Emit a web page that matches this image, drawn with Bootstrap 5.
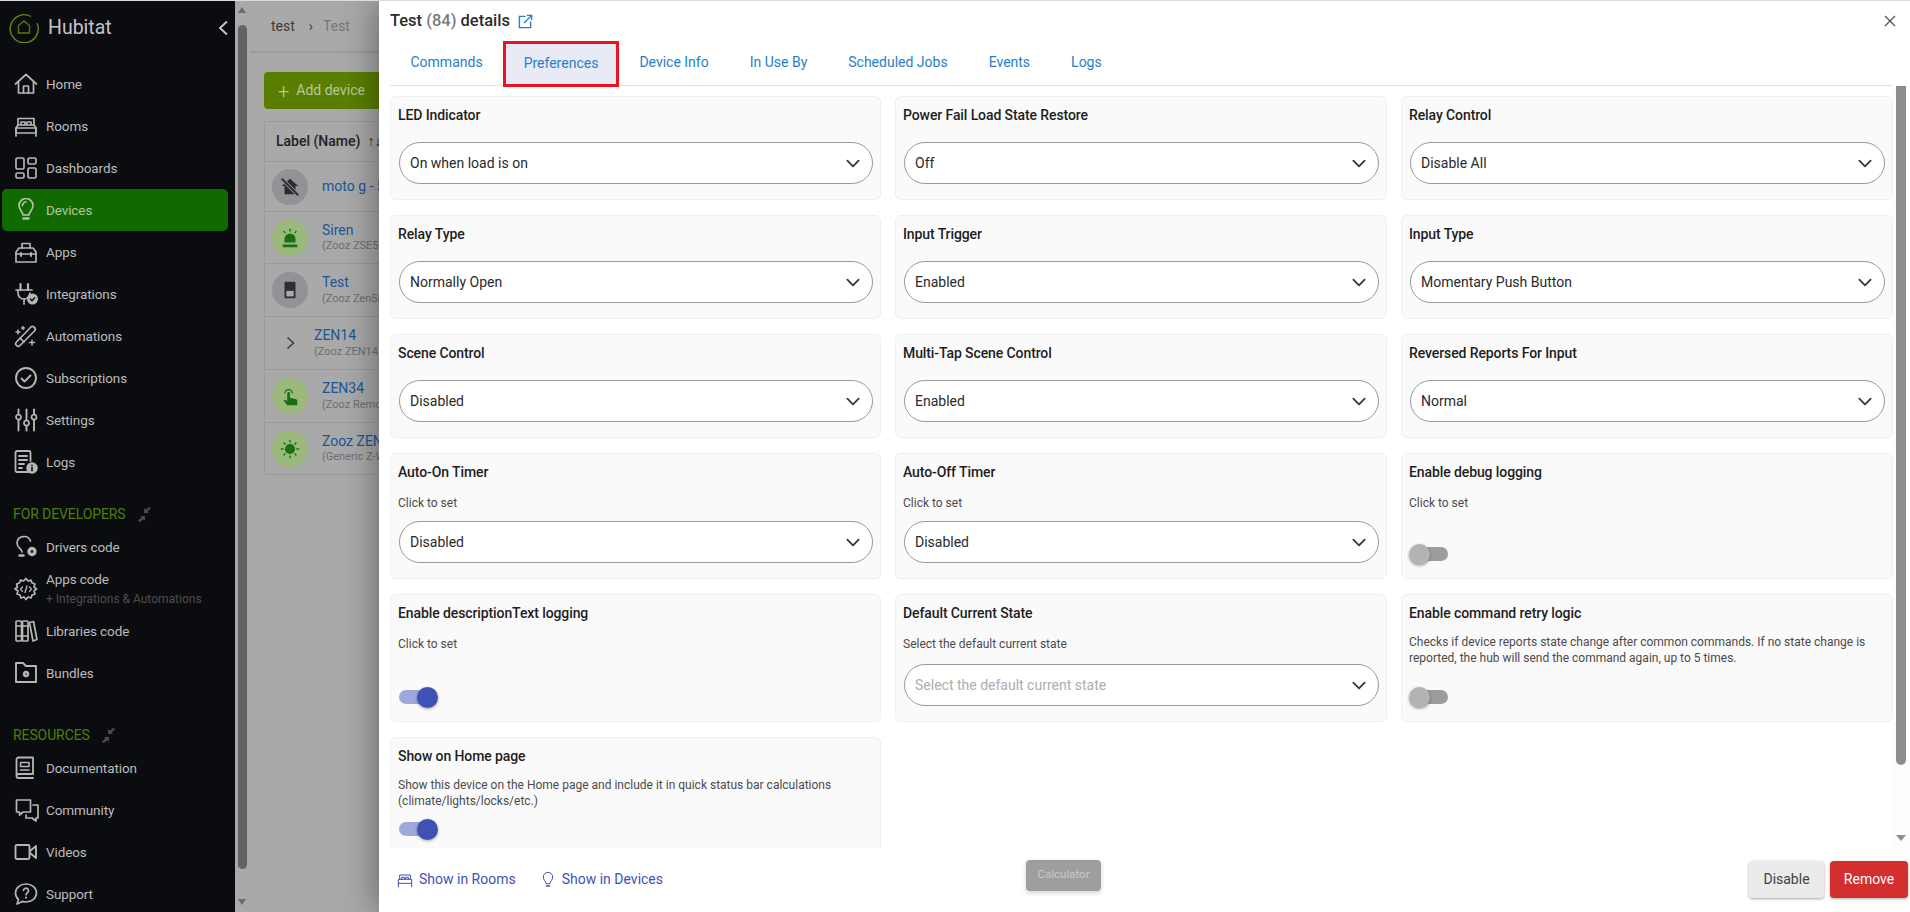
<!DOCTYPE html>
<html lang="en">
<head>
  <meta charset="UTF-8" />
  <title>Test (84) details | Hubitat</title>
  <link href="https://cdn.jsdelivr.net/npm/bootstrap@5.3.0/dist/css/bootstrap.min.css" rel="stylesheet">
  <style>
    html, body { height: 100%; overflow: hidden; }
    body { font-family: Roboto, "Liberation Sans", sans-serif; font-size: 14px; background: #a9a9a9; }
    .shell { height: 912px; border-top: 1px solid #dcdcdc; overflow: hidden; }

    /* sidebar */
    .side { width: 235px; flex: none; background: #0b0c10; color: #bcbcbc; }
    .brand { height: 62px; padding: 0 6px 8px 9px; }
    .brand-name { font-size: 19.5px; margin-left: 9px; color: #c4c4c4; }
    .side-item { height: 42px; margin: 0 7px 0 2px; padding-left: 12px; border-radius: 5px; color: #bcbcbc; text-decoration: none; letter-spacing: -.1px; line-height: 1.25; font-size: 13.5px; }
    .side-item svg { width: 24px; height: 24px; flex: none; margin-right: 8px; fill: none; stroke: #b6b6b6; stroke-width: 1.7; stroke-linecap: round; stroke-linejoin: round; }
    .side-item svg .fl { fill: #b6b6b6; stroke: none; }
    .side-item.on { background: #116a00; color: #b3c5a6; }
    .side-item.on svg { stroke: #b3c5a6; }
    .side-sub { display: block; font-size: 12px; color: #4d4d4d; margin-top: 4px; letter-spacing: 0; }
    .side-head { height: 24px; padding-left: 13px; color: #4b7f09; font-size: 14px; letter-spacing: -.1px; }
    .side-head svg { width: 15px; height: 15px; margin-left: 11px; fill: #4c4c4c; }
    .gap-a { margin-top: 19px; }
    .gap-b { margin-top: 29px; }

    /* page scrollbar */
    .page-bar { width: 12px; flex: none; padding: 0 0 0 3px; }
    .page-bar .thumb { height: 844px; width: 9px; margin-top: 12px; background: #636363; border-radius: 5px; }
    .arr-up, .arr-dn, .arr-lf { width: 0; height: 0; border-style: solid; }
    .page-bar .arr-up { margin-top: 6px; border-width: 0 4.5px 6px; border-color: transparent transparent #6b6b6b; }
    .page-bar .arr-dn { margin-top: 30px; border-width: 6px 4.5px 0; border-color: #6b6b6b transparent transparent; }

    /* dimmed page behind the modal */
    .behind { flex: 1; min-width: 0; overflow: hidden; background: #a9a9a9; }
    .behind-in { width: 420px; }
    .crumbs { height: 52px; margin-left: 3px; border-bottom: 2px solid #9b9b9b; padding-left: 21px; color: #3c3c3c; font-size: 14px; }
    .crumbs .sep { margin: 0 10px 0 14px; }
    .crumbs .cur { color: #767676; }
    .add-btn { height: 37px; width: 150px; margin: 19px 0 12px 17px; background: #5a7f00; color: #b9c99a; border-radius: 4px; padding-left: 14px; font-size: 14px; }
    .add-btn span { font-size: 20px; line-height: 1; margin-right: 7px; font-weight: 300; }
    .dev-table { margin-left: 17px; border-left: 1px solid #9b9b9b; }
    .dev-row { height: 53px; border-bottom: 1px solid #999; padding-left: 7px; line-height: 1.1; white-space: nowrap; }
    .dev-top { height: 41px; border-top: 1px solid #999; padding-left: 11px; color: #222; font-weight: 500; font-size: 14px; }
    .dev-ic { width: 36px; height: 36px; border-radius: 50%; flex: none; margin-right: 14px; background: #929297; }
    .dev-ic.gr { background: #9bb97b; }
    .dev-ic svg { width: 22px; height: 22px; }
    .dev-name { color: #1a5597; font-size: 14px; }
    .dev-sub { color: #6e6e6e; font-size: 11px; display: block; margin-top: 2px; }
    .dev-chev { width: 36px; flex: none; margin-right: 6px; }

    /* modal */
    .sheet { width: 1531px; flex: none; background: #fff; box-shadow: 0 0 34px rgba(0,0,0,.45); position: relative; height: 911px; }
    .sheet-head { height: 40px; padding: 0 11px; }
    .sheet-title { font-size: 16.5px; font-weight: 500; color: #2b2b2b; margin: 0; }
    .sheet-title em { font-style: normal; color: #7b7b7b; }
    .sheet-close { width: 14px; height: 14px; margin-right: 2px; }
    .tab-line { margin: 0 17px 0 11px; height: 45px; border-bottom: 1px solid #e2e2e2; flex-wrap: nowrap; }
    .tab-line .nav-link { color: #2a7ec9; height: 45px; padding: 0 20.5px; font-size: 14px; line-height: 42px; border-radius: 0; }
    .tab-line .nav-link.sel { background: #e8eaf6; border: 3px solid #e9141e; padding: 0 17.5px; line-height: 38px; height: 46px; }
    .sheet-body { height: 762px; overflow: hidden; }
    .pref-grid { flex: 1; display: grid; grid-template-columns: 491px 492px 492px; grid-template-rows: 104px 104px 104px 126px 128px 130px; column-gap: 14px; row-gap: 15px; padding: 10px 0 0 11px; align-content: start; }
    .pref { background: #fafafa; border: 1px solid #f0f0f0; border-radius: 6px; padding: 8px 7px 15px; display: flex; flex-direction: column; }
    .pref-t { font-weight: 500; font-size: 14px; line-height: 20px; color: #1e1e1e; letter-spacing: -.1px; }
    .pref-d { font-size: 12px; line-height: 16px; color: #4b4b4b; margin-top: 13px; }
    .pref-d.tight { margin-top: 11px; padding-right: 14px; }
    .pref .form-select { margin-top: auto; height: 42px; border-radius: 21px; border: 1px solid #9a9a9a; padding: 0 36px 0 10px; font-size: 14px; color: #2a2a2a; background-position: right 9px center; background-size: 20px 15px; width: calc(100% + -1px); margin-left: 1px; box-shadow: none; }
    .pref .form-select.empty { color: #adadad; }
    .tgl { width: 38px; height: 14px; border-radius: 7px; background: #9fa8da; position: relative; margin: auto 0 2px; margin-left: 1px; }
    .tgl::after { content: ""; position: absolute; top: -3.5px; right: -1px; width: 21px; height: 21px; border-radius: 50%; background: #3f51b5; box-shadow: 0 1px 3px rgba(0,0,0,.35); }
    .tgl.off { background: #9c9c9c; }
    .tgl.off::after { right: auto; left: -1px; background: #b3b3b3; }
    .sheet-bar { width: 17px; flex: none; background: #fdfdfd; margin-top: -41px; padding: 7px 4px 0 3px; }
    .sheet-bar .arr-up { border-width: 0 5px 6px; border-color: transparent transparent #8c8c8c; }
    .sheet-bar .thumb { width: 10px; height: 703px; margin-top: 4px; background: #8c8c8c; border-radius: 5px; }
    .sheet-bar .arr-dn { margin-top: 70px; border-width: 6px 5px 0; border-color: #8c8c8c transparent transparent; }
    .sheet-foot { height: 63px; padding: 0 2px 0 18px; }
    .foot-link { color: #3f51b5; text-decoration: none; font-size: 14px; }
    .foot-link svg { width: 16px; height: 16px; margin-right: 6px; fill: none; stroke: #3f51b5; stroke-width: 1.5; stroke-linecap: round; stroke-linejoin: round; }
    .calc-btn { width: 75px; height: 31px; margin-left: 363px; margin-top: -9px; background: #9e9e9e; color: #c9c9c9; border: 0; font-size: 11.5px; border-radius: 4px; padding: 0; box-shadow: 0 2px 5px rgba(0,0,0,.18); }
    .act-btn { height: 37px; border: 0; font-size: 14px; border-radius: 4px; padding: 0; box-shadow: 0 1px 3px rgba(0,0,0,.35); }
    .act-dis { width: 75px; background: #ebebeb; color: #3f3f3f; }
    .act-rem { width: 78px; background: #d32f2f; color: #fff; margin-left: 6px; }
  </style>
</head>
<body>
<div class="shell d-flex">

  <aside class="side">
    <div class="brand d-flex align-items-center">
      <svg width="30" height="30" viewBox="0 0 30 30" fill="none" stroke="#5c8a0c" stroke-width="1.4"><path d="M22 3.5A14 14 0 1 0 28 10" /><path d="M9.5 20V12.5L15 8l5.5 4.500V20z" stroke="#4f7a0b" /></svg>
      <span class="brand-name">Hubitat</span>
      <svg class="ms-auto" width="11" height="16" viewBox="0 0 11 16" fill="none" stroke="#c4c4c4" stroke-width="2"><path d="M9 1.500 2 8l7 6.500" /></svg>
    </div>

    <nav class="d-flex flex-column">
      <a class="side-item d-flex align-items-center" href="#"><svg viewBox="0 0 24 24"><path d="M1.500 12 12 2.500 22.500 12" /><path d="M4.500 10v11h15V10" /><path d="M9.500 21v-7h5v7" /></svg>Home</a>
      <a class="side-item d-flex align-items-center" href="#"><svg viewBox="0 0 24 24"><path d="M4 11V4.500h16V11" /><path d="M7 10.500V8h4v2.500M13 10.500V8h4v2.500" /><path d="M2 22v-8l2-3h16l2 3v8" /><path d="M2 14h20v5H2z" /></svg>Rooms</a>
      <a class="side-item d-flex align-items-center" href="#"><svg viewBox="0 0 24 24"><rect x="2" y="2" width="8" height="11" rx="1.500" /><rect x="14" y="2" width="8" height="6" rx="1.500" /><rect x="2" y="17" width="8" height="5" rx="1.500" /><rect x="14" y="12" width="8" height="10" rx="1.500" /></svg>Dashboards</a>
      <a class="side-item on d-flex align-items-center" href="#"><svg viewBox="0 0 24 24"><path d="M9 17c0-3-4-5-4-9.500a7 7 0 0 1 14 0C19 12 15 14 15 17z" /><path d="M9.500 20.500h5" stroke-width="2.400" /><path d="M8.500 7.500A3.500 3.500 0 0 1 12 4" /></svg>Devices</a>
      <a class="side-item d-flex align-items-center" href="#"><svg viewBox="0 0 24 24"><path d="M2 22V12l3-4h14l3 4v10z" /><path d="M8 8V3.500h8V8M2 14h20" /><path d="M7 13v3M17 13v3" stroke-width="2" /></svg>Apps</a>
      <a class="side-item d-flex align-items-center" href="#"><svg viewBox="0 0 24 24"><path d="M6.500 2v6M14 2v6" stroke-width="2.200" /><path d="M2 8h16M4 8v3a6 6 0 0 0 12 0" /><path d="M10 17v5" /><circle class="fl" cx="18.500" cy="17" r="5.500" /><path d="m16.300 17 1.700 1.700 2.700-3" stroke="#0b0c10" stroke-width="1.300" /></svg>Integrations</a>
      <a class="side-item d-flex align-items-center" href="#"><svg viewBox="0 0 24 24"><path d="M2.500 18 16.500 3.500a2 2 0 0 1 4 3.500L6 21.500a2.200 2.200 0 0 1-3.500-3.500z" /><path d="M6 14l4 4" /><path d="M4 6v4M2 8h4M9 2.500v3M7.500 4h3M18 16v5M15.500 18.500h5" stroke-width="1.400" /></svg>Automations</a>
      <a class="side-item d-flex align-items-center" href="#"><svg viewBox="0 0 24 24"><circle cx="12" cy="12" r="10" stroke-width="1.900" /><path d="m7.500 12.500 3 3 6-6" stroke-width="1.900" /></svg>Subscriptions</a>
      <a class="side-item d-flex align-items-center" href="#"><svg viewBox="0 0 24 24"><path d="M4.500 1.500v5M4.500 12v10.500M12.500 1.500V12M12.500 18v4.500M20 1.500v5M20 12v10.500" stroke-width="1.900" /><circle cx="4.500" cy="9" r="2.500" /><circle cx="12.500" cy="15" r="2.500" /><circle cx="20" cy="9" r="2.500" /></svg>Settings</a>
      <a class="side-item d-flex align-items-center" href="#"><svg viewBox="0 0 24 24"><path d="M15 22H3a1.500 1.500 0 0 1-1.500-1.500v-18A1.500 1.500 0 0 1 3 1h12a1.500 1.500 0 0 1 1.500 1.500V11" stroke-width="1.800" /><path d="M5 6h8M5 10h8M5 14h5M5 18h3" stroke-width="1.800" /><circle class="fl" cx="18" cy="18" r="5.800" /><path d="M18 17.500v3.200M18 15.200v.4" stroke="#0b0c10" stroke-width="1.600" /></svg>Logs</a>
    </nav>

    <div class="side-head gap-a d-flex align-items-center">FOR DEVELOPERS<svg viewBox="0 0 16 16"><path d="M1 15l4-4-2-1.500h5.500V15L7 13l-4 3zM15 1l-4 4 2 1.500H7.500V1L9 3l4-3z" /></svg></div>
    <nav class="d-flex flex-column">
      <a class="side-item d-flex align-items-center" href="#"><svg viewBox="0 0 24 24"><path d="M8 17c0-3-5-4-5-9a7 7 0 0 1 13.500-2" /><path d="M5.500 20.500h4" stroke-width="2.400" /><circle cx="18" cy="16.500" r="3" stroke-width="3.400" stroke-dasharray="2.400 1.300" /></svg>Drivers code</a>
      <a class="side-item d-flex align-items-center" href="#"><svg viewBox="0 0 24 24"><path d="M12 1.500l2 2.500 3-1 1 3 3 1-1 3 2.500 2-2.500 2 1 3-3 1-1 3-3-1-2 2.500-2-2.500-3 1-1-3-3-1 1-3L1 12l2.500-2-1-3 3-1 1-3 3 1z" /><path d="m8.500 10-2 2.200 2 2.200M15.500 10l2 2.200-2 2.200M13 9l-2 6.500" stroke-width="1.300" /></svg><span>Apps code<span class="side-sub">+ Integrations &amp; Automations</span></span></a>
      <a class="side-item d-flex align-items-center" href="#"><svg viewBox="0 0 24 24"><rect x="2" y="2" width="5.500" height="20" rx="1" /><rect x="8.500" y="2" width="5.500" height="20" rx="1" /><path d="M15.500 3.500l4-1 3.500 18-4 1.500zM2 7h5.500M8.500 7H14M2 17h5.500M8.500 17H14" /></svg>Libraries code</a>
      <a class="side-item d-flex align-items-center" href="#"><svg viewBox="0 0 24 24"><path d="M2 21V2h7l3 3h10v16z" stroke-width="1.900" /><circle cx="12" cy="13" r="2" stroke-width="2.600" stroke-dasharray="2 1" /></svg>Bundles</a>
    </nav>

    <div class="side-head gap-b d-flex align-items-center">RESOURCES<svg viewBox="0 0 16 16"><path d="M1 15l4-4-2-1.500h5.500V15L7 13l-4 3zM15 1l-4 4 2 1.500H7.500V1L9 3l4-3z" /></svg></div>
    <nav class="d-flex flex-column">
      <a class="side-item d-flex align-items-center" href="#"><svg viewBox="0 0 24 24"><path d="M19 18H4.500A2 2 0 0 0 2.500 20a2 2 0 0 0 2 2H19M2.500 20V3.500a2 2 0 0 1 2-2H19V18" stroke-width="1.800" /><path d="M6.500 6.500h8.500v4H6.500z" stroke-width="1.500" /><path d="M6.500 14h8.500" /></svg>Documentation</a>
      <a class="side-item d-flex align-items-center" href="#"><svg viewBox="0 0 24 24" style="width:26px;margin-right:6px"><path d="M1.500 2h14v12H8l-3.500 3v-3h-3z" /><path d="M18 7h5v13h-2v3l-4-3h-6v-3" /></svg>Community</a>
      <a class="side-item d-flex align-items-center" href="#"><svg viewBox="0 0 24 24"><rect x="1.500" y="5" width="14" height="14" rx="1.500" stroke-width="1.900" /><path d="M16 11l6-5v12l-6-5" stroke-width="1.900" /></svg>Videos</a>
      <a class="side-item d-flex align-items-center" href="#"><svg viewBox="0 0 24 24"><path d="M12 2c6 0 10.500 4 10.500 9S18 20 12 20c-1.300 0-2.600-.2-3.700-.6L3 22l1.500-4.500C2.600 15.900 1.500 13.600 1.500 11 1.500 6 6 2 12 2z" /><path d="M9.500 8.500a2.500 2.500 0 1 1 3.800 2.200c-.8.500-1.300 1-1.300 2" /><path d="M12 15.500v.3" stroke-width="2" /></svg>Support</a>
    </nav>
  </aside>

  <div class="page-bar">
    <div class="arr-up"></div>
    <div class="thumb"></div>
    <div class="arr-dn"></div>
  </div>

  <div class="behind">
    <div class="behind-in">
      <div class="crumbs d-flex align-items-center">test<span class="sep">&#8250;</span><span class="cur">Test</span></div>
      <div class="add-btn d-flex align-items-center"><span>+</span>Add device</div>
      <div class="dev-table">
        <div class="dev-row dev-top d-flex align-items-center">Label (Name)&nbsp; &#8593;&#8595;</div>
        <div class="dev-row d-flex align-items-center" style="height:50px">
          <div class="dev-ic d-flex align-items-center justify-content-center"><svg viewBox="0 0 24 24" fill="#2c2c2c"><path d="M12 3 3 11h3v9h12v-9h3z" /><path d="M3 3l18 18" stroke="#929297" stroke-width="4" /><path d="M3 3l18 18" stroke="#2c2c2c" stroke-width="2" /></svg></div>
          <span class="dev-name">moto g - 5G</span>
        </div>
        <div class="dev-row d-flex align-items-center" style="height:52px">
          <div class="dev-ic gr d-flex align-items-center justify-content-center"><svg viewBox="0 0 24 24" fill="#196f12"><path d="M6 17v-4a6 6 0 0 1 12 0v4zM4 19h16v3H4z" /><path d="M12 2v3M5 4.500l2 2M19 4.500l-2 2" stroke="#196f12" stroke-width="1.500" /></svg></div>
          <span><span class="dev-name">Siren</span><span class="dev-sub">(Zooz ZSE50 Siren)</span></span>
        </div>
        <div class="dev-row d-flex align-items-center">
          <div class="dev-ic d-flex align-items-center justify-content-center"><svg viewBox="0 0 24 24"><rect x="6" y="3" width="12" height="18" rx="1" fill="#2f2f33" /><rect x="8" y="13" width="8" height="6" fill="#a9a9ae" /></svg></div>
          <span><span class="dev-name">Test</span><span class="dev-sub">(Zooz Zen58 Switch)</span></span>
        </div>
        <div class="dev-row d-flex align-items-center">
          <div class="dev-chev d-flex justify-content-center"><svg width="9" height="14" viewBox="0 0 9 14" fill="none" stroke="#3a3a3a" stroke-width="1.500"><path d="m1.500 1.500 6 5.500-6 5.500" /></svg></div>
          <span><span class="dev-name">ZEN14</span><span class="dev-sub">(Zooz ZEN14 Plug)</span></span>
        </div>
        <div class="dev-row d-flex align-items-center">
          <div class="dev-ic gr d-flex align-items-center justify-content-center"><svg viewBox="0 0 24 24" fill="#196f12"><path d="M9 9a1.500 1.500 0 0 1 3 0v5l7 1.500 1 2V22H9l-4-5 1-1 3 1.500z" /><path d="M6.500 9a4 4 0 0 1 8 0" fill="none" stroke="#196f12" stroke-width="1.500" /></svg></div>
          <span><span class="dev-name">ZEN34</span><span class="dev-sub">(Zooz Remote)</span></span>
        </div>
        <div class="dev-row d-flex align-items-center" style="height:52px">
          <div class="dev-ic gr d-flex align-items-center justify-content-center"><svg viewBox="0 0 24 24" fill="#196f12"><circle cx="12" cy="12" r="5.500" /><path d="M12 2v3M12 19v3M2 12h3M19 12h3M5 5l2 2M17 17l2 2M5 19l2-2M17 7l2-2" stroke="#196f12" stroke-width="1.500" /></svg></div>
          <span><span class="dev-name">Zooz ZEN</span><span class="dev-sub">(Generic Z-Wave)</span></span>
        </div>
      </div>
    </div>
  </div>

  <section class="sheet d-flex flex-column">
    <div class="sheet-head d-flex align-items-center">
      <h5 class="sheet-title">Test <em>(84)</em> details</h5>
      <svg class="ms-2" width="15" height="15" viewBox="0 0 16 16" fill="none" stroke="#2a7ec9" stroke-width="1.500"><path d="M8 2.500H1.500v12h12V8" /><path d="M6.500 9.500 14 2M9.500 1.500h5v5" /></svg>
      <svg class="sheet-close ms-auto" viewBox="0 0 14 14" fill="none" stroke="#555" stroke-width="1.300"><path d="m2 2 10 10M12 2 2 12" /></svg>
    </div>

    <ul class="nav tab-line">
      <li class="nav-item"><a class="nav-link" href="#">Commands</a></li>
      <li class="nav-item"><a class="nav-link sel" href="#">Preferences</a></li>
      <li class="nav-item"><a class="nav-link" href="#">Device Info</a></li>
      <li class="nav-item"><a class="nav-link" href="#">In Use By</a></li>
      <li class="nav-item"><a class="nav-link" href="#">Scheduled Jobs</a></li>
      <li class="nav-item"><a class="nav-link" href="#">Events</a></li>
      <li class="nav-item"><a class="nav-link" href="#">Logs</a></li>
    </ul>

    <div class="sheet-body d-flex">
      <div class="pref-grid">
        <div class="pref"><div class="pref-t">LED Indicator</div><select class="form-select"><option>On when load is on</option></select></div>
        <div class="pref"><div class="pref-t">Power Fail Load State Restore</div><select class="form-select"><option>Off</option></select></div>
        <div class="pref"><div class="pref-t">Relay Control</div><select class="form-select"><option>Disable All</option></select></div>

        <div class="pref"><div class="pref-t">Relay Type</div><select class="form-select"><option>Normally Open</option></select></div>
        <div class="pref"><div class="pref-t">Input Trigger</div><select class="form-select"><option>Enabled</option></select></div>
        <div class="pref"><div class="pref-t">Input Type</div><select class="form-select"><option>Momentary Push Button</option></select></div>

        <div class="pref"><div class="pref-t">Scene Control</div><select class="form-select"><option>Disabled</option></select></div>
        <div class="pref"><div class="pref-t">Multi-Tap Scene Control</div><select class="form-select"><option>Enabled</option></select></div>
        <div class="pref"><div class="pref-t">Reversed Reports For Input</div><select class="form-select"><option>Normal</option></select></div>

        <div class="pref"><div class="pref-t">Auto-On Timer</div><div class="pref-d">Click to set</div><select class="form-select"><option>Disabled</option></select></div>
        <div class="pref"><div class="pref-t">Auto-Off Timer</div><div class="pref-d">Click to set</div><select class="form-select"><option>Disabled</option></select></div>
        <div class="pref"><div class="pref-t">Enable debug logging</div><div class="pref-d">Click to set</div><div class="tgl off"></div></div>

        <div class="pref"><div class="pref-t">Enable descriptionText logging</div><div class="pref-d">Click to set</div><div class="tgl"></div></div>
        <div class="pref"><div class="pref-t">Default Current State</div><div class="pref-d">Select the default current state</div><select class="form-select empty"><option>Select the default current state</option></select></div>
        <div class="pref"><div class="pref-t">Enable command retry logic</div><div class="pref-d tight">Checks if device reports state change after common commands. If no state change is reported, the hub will send the command again, up to 5 times.</div><div class="tgl off"></div></div>

        <div class="pref"><div class="pref-t">Show on Home page</div><div class="pref-d tight">Show this device on the Home page and include it in quick status bar calculations (climate/lights/locks/etc.)</div><div class="tgl" style="margin-top:13px"></div></div>
      </div>
      <div class="sheet-bar">
        <div class="arr-up"></div>
        <div class="thumb"></div>
        <div class="arr-dn"></div>
      </div>
    </div>

    <div class="sheet-foot d-flex align-items-center">
      <a class="foot-link d-flex align-items-center" href="#"><svg viewBox="0 0 24 24"><path d="M4 11V4.500h16V11M7 10.500V8h4v2.500M13 10.500V8h4v2.500" /><path d="M2 22V11h20v11M2 17h20" /></svg>Show in Rooms</a>
      <a class="foot-link d-flex align-items-center ms-4" href="#"><svg viewBox="0 0 24 24"><path d="M9 17c0-3-4-5-4-9.500a7 7 0 0 1 14 0C19 12 15 14 15 17z" /><path d="M9.500 21h5" stroke-width="2" /></svg>Show in Devices</a>
      <button class="calc-btn" type="button">Calculator</button>
      <button class="act-btn act-dis ms-auto" type="button">Disable</button>
      <button class="act-btn act-rem" type="button">Remove</button>
    </div>
  </section>
</div>

<script src="https://cdn.jsdelivr.net/npm/bootstrap@5.3.0/dist/js/bootstrap.bundle.min.js"></script>
</body>
</html>
